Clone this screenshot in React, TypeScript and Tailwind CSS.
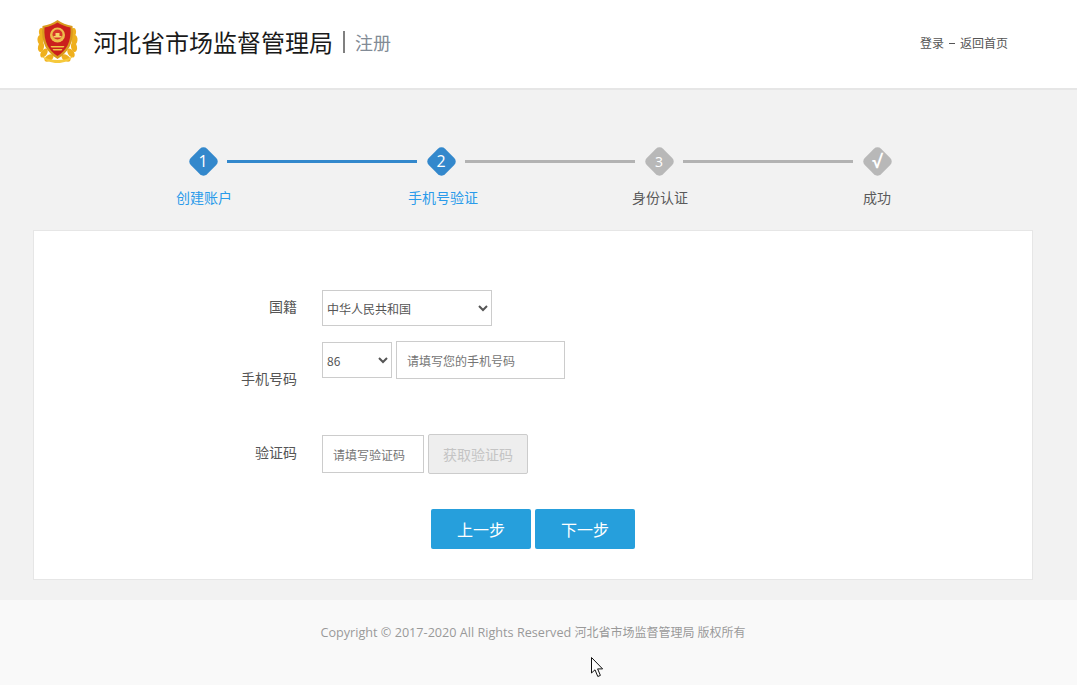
const cjk = 'font-["Noto_Sans_CJK_SC","Liberation_Sans",sans-serif]';

const steps = [
  { label: '创建账户', active: true, offset: 'ml-[154px]' },
  { label: '手机号验证', active: true, offset: 'ml-[139px]' },
  { label: '身份认证', active: false, offset: 'ml-[117px]' },
  { label: '成功', active: false, offset: 'ml-[117px]' },
];

const leaves = [
  [5, 14, -12],
  [3.500, 21, -6],
  [4, 28, 12],
  [7, 34, 34],
  [12, 39, 58],
];

function Emblem() {
  return (
    <svg width="42" height="46" viewBox="0 0 42 46" className="shrink-0">
      {/* wheat wreath */}
      {leaves.map(([x, y, r]) => (
        <g key={`${x}-${y}`}>
          <ellipse cx={x} cy={y} rx="3" ry="5" fill="#efb01e" transform={`rotate(${r} ${x} ${y})`} />
          <ellipse cx={41 - x} cy={y} rx="3" ry="5" fill="#efb01e" transform={`rotate(${-r} ${41 - x} ${y})`} />
        </g>
      ))}
      <path d="M5 37c5 3 10 4 15.500 4S31 40 36 37c-3 5-9 7-15.500 7S8 42 5 37z" fill="#f6c93c" />
      {/* shield */}
      <path d="M20.500 1c4 3 9 5 15 6 1 8 0 15-3 21-3 5-7 9-12 12-5-3-9-7-12-12C5.500 22 4.500 15 5.500 7c6-1 11-3 15-6z" fill="#d99a1e" />
      <path d="M20.500 3.500c4 2.500 8 4 13 5 .5 7-.5 13-3 18-2.500 4.500-6 8-10 10.500-4-2.500-7.500-6-10-10.500-2.500-5-3.500-11-3-18 5-1 9-2.500 13-5z" fill="#cb1f1d" />
      {/* national emblem */}
      <circle cx="20.500" cy="16" r="7.500" fill="#eebd4a" />
      <circle cx="20.500" cy="15.500" r="5" fill="#d8352a" />
      <path d="M16.500 17h8v1.500h-8zM18.500 14h4v3h-4z" fill="#f5d468" />
      <path d="M13.500 27h14l-1 1.500h-12zM15.500 30h10l-1 1.500h-8z" fill="#f0c544" />
    </svg>
  );
}

function StepMark({ mark, active }: { mark: string; active: boolean }) {
  return (
    <div className="relative w-[30px] h-[30px] flex items-center justify-center shrink-0">
      <div className={`absolute w-[23px] h-[23px] rotate-45 rounded-[5px] ${active ? 'bg-[#3388cc]' : 'bg-[#b8b8b8]'}`} />
      <span className={`relative font-["Open_Sans",sans-serif] text-white ${active ? 'text-[16px]' : 'text-[14px]'} ${mark === '√' ? 'font-bold text-[18px]' : ''}`}>
        {mark}
      </span>
    </div>
  );
}

function Line({ active, width }: { active: boolean; width: string }) {
  return <div className={`h-[3px] ${width} ${active ? 'bg-[#3388cc]' : 'bg-[#b3b3b3]'}`} />;
}

export default function App() {
  return (
    <div className={`relative w-[1077px] h-[685px] overflow-hidden bg-[#f2f2f2] ${cjk}`}>
      {/* Header */}
      <header className="h-[90px] bg-white border-b-2 border-[#e6e6e6] flex items-center pl-[37px] pr-[69px] pb-[4px]">
        <Emblem />
        <h1 className="ml-[14px] text-[24px] leading-none text-[#1a1a1a]">河北省市场监督管理局</h1>
        <div className="ml-[10px] w-[2px] h-[22px] bg-[#808080]" />
        <span className="ml-[10px] text-[18px] leading-none text-[#828b96]">注册</span>
        <nav className="ml-auto flex items-center gap-[5px] pt-[2px] text-[12px] text-[#555555]">
          <span>登录</span>
          <span className="w-[6px] h-px bg-[#555555]" />
          <span>返回首页</span>
        </nav>
      </header>

      {/* Stepper */}
      <div className="pt-[56px] pl-[188px] flex items-center">
        <StepMark mark="1" active />
        <div className="mx-[9px]"><Line active width="w-[190px]" /></div>
        <StepMark mark="2" active />
        <div className="mx-[9px]"><Line active={false} width="w-[170px]" /></div>
        <StepMark mark="3" active={false} />
        <div className="mx-[9px]"><Line active={false} width="w-[170px]" /></div>
        <StepMark mark="√" active={false} />
      </div>
      <div className="flex mt-[5px] h-[32px]">
        {steps.map((s) => (
          <div
            key={s.label}
            className={`w-[100px] text-center text-[14px] leading-[32px] ${s.offset} ${s.active ? 'text-[#2a9bea]' : 'text-[#5a5a5a]'}`}
          >
            {s.label}
          </div>
        ))}
      </div>

      {/* Form card */}
      <main className="mx-[33px] mt-[17px] w-[1000px] h-[350px] bg-white border border-[#e6e6e6] pt-[59px]">
        <div className="flex h-[36px] items-center">
          <label className="w-[263px] text-right text-[14px] pb-[4px] text-[#555555]">国籍</label>
          <select className="ml-[25px] w-[170px] h-[36px] bg-white border border-[#cccccc] text-[12px] text-[#555555]">
            <option>中华人民共和国</option>
          </select>
        </div>

        <div className="flex mt-[15px] h-[70px]">
          <label className="w-[263px] text-right text-[14px] leading-[20px] pt-[27px] text-[#555555]">手机号码</label>
          <div className="ml-[25px] flex items-start gap-[4px]">
            <select className="mt-[1px] w-[70px] h-[36px] bg-white border border-[#cccccc] text-[12px] text-[#555555]">
              <option>86</option>
            </select>
            <input
              placeholder="请填写您的手机号码"
              className="w-[169px] h-[38px] border border-[#cccccc] px-[10px] text-[12px] placeholder:text-[#757575]"
            />
          </div>
        </div>

        <div className="flex mt-[23px] items-center h-[40px]">
          <label className="w-[263px] text-right text-[14px] pb-[4px] text-[#555555]">验证码</label>
          <input
            placeholder="请填写验证码"
            className="ml-[25px] w-[102px] h-[38px] border border-[#cccccc] px-[10px] text-[12px] placeholder:text-[#757575]"
          />
          <button className={`ml-[4px] w-[100px] h-[40px] rounded-[2px] bg-[#eeeeee] border border-[#cccccc] text-[14px] text-[#c4c4c4] ${cjk}`}>
            获取验证码
          </button>
        </div>

        <div className="flex justify-center gap-[4px] mt-[35px]">
          <button className={`w-[100px] h-[40px] rounded-[2px] bg-[#269fdc] text-[16px] text-white ${cjk}`}>上一步</button>
          <button className={`w-[100px] h-[40px] rounded-[2px] bg-[#269fdc] text-[16px] text-white ${cjk}`}>下一步</button>
        </div>
      </main>

      {/* Footer */}
      <footer className="mt-[20px] h-[85px] bg-[#f9f9f9] text-center pt-[22px] pr-[11px] text-[12px] leading-[20px] text-[#999999] font-['Open_Sans','Noto_Sans_CJK_SC',sans-serif]">
        <span className="text-[12.650px]">Copyright © 2017-2020 All Rights Reserved</span> 河北省市场监督管理局 版权所有
      </footer>

      {/* Mouse pointer from the capture */}
      <svg width="14" height="21" viewBox="0 0 14 21" className="absolute left-[591px] top-[657px]">
        <path d="M.5.500v15.500l3.500-3.200 2.800 6.700 2.600-1.100-2.800-6.500h5z" fill="white" stroke="#111111" strokeWidth="1" />
      </svg>
    </div>
  );
}
